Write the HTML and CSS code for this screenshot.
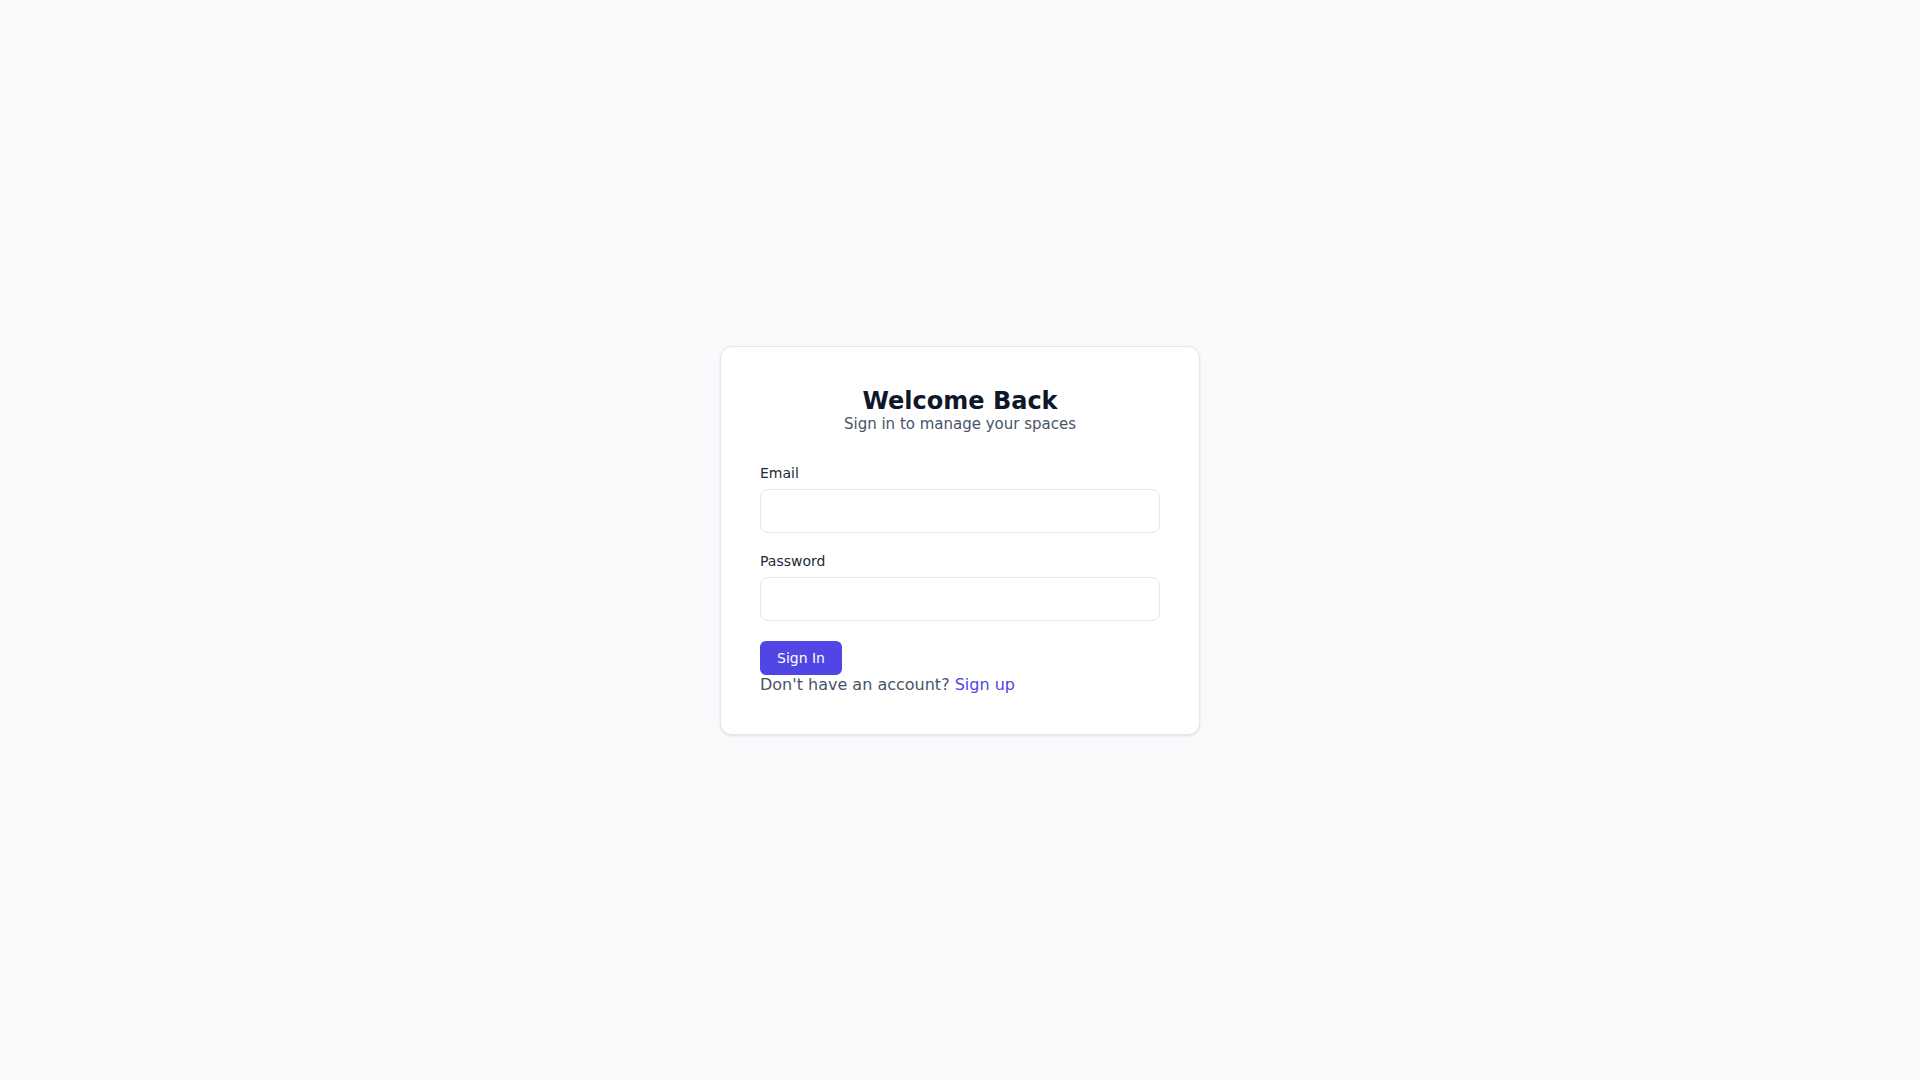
FILE: index.html
```html
<!DOCTYPE html>
<html lang="en">
<head>
<meta charset="utf-8">
<title>Sign In</title>
<link rel="stylesheet" href="styles.css">
</head>
<body>
<main class="page">
  <div class="card">
    <div class="header">
      <h1 class="title">Welcome Back</h1>
      <p class="subtitle">Sign in to manage your spaces</p>
    </div>
    <form class="form">
      <div class="field">
        <label class="label" for="email">Email</label>
        <input class="input" id="email" type="email">
      </div>
      <div class="field">
        <label class="label" for="password">Password</label>
        <input class="input" id="password" type="password">
      </div>
      <div class="actions">
        <button class="btn" type="button">Sign In</button>
        <p class="signup">Don't have an account? <a class="link" href="#">Sign up</a></p>
      </div>
    </form>
  </div>
</main>
</body>
</html>
```
FILE: styles.css
```css
* { box-sizing: border-box; }
html, body { margin: 0; padding: 0; }
body {
  font-family: "DejaVu Sans", sans-serif;
  background: #f8fafc;
  color: #0f172a;
  line-height: normal;
}
.page {
  min-height: 100vh;
  display: flex;
  align-items: center;
  justify-content: center;
}
.card {
  width: 480px;
  background: #ffffff;
  border: 1px solid #e2e8f0;
  border-radius: 12px;
  box-shadow: 0 1px 3px rgba(15, 23, 42, 0.07), 0 1px 2px rgba(15, 23, 42, 0.04);
  padding: 40px 39px 40px;
}
.header {
  text-align: center;
  margin-bottom: 32px;
}
.title {
  margin: 0;
  font-size: 24px;
  font-weight: 700;
  color: #0f172a;
}
.subtitle {
  margin: 0;
  font-size: 15px;
  color: #475569;
}
.form {
  display: flex;
  flex-direction: column;
  gap: 20px;
}
.field {
  display: flex;
  flex-direction: column;
}
.label {
  font-size: 14px;
  color: #1e293b;
  margin-bottom: 8px;
}
.input {
  height: 44px;
  width: 100%;
  border: 1px solid #e2e8f0;
  border-radius: 8px;
  background: #fff;
  font-family: inherit;
  font-size: 16px;
  padding: 0 12px;
  outline: none;
}
.actions {
  display: flex;
  flex-direction: column;
  align-items: flex-start;
}
.btn {
  font-family: inherit;
  font-size: 14px;
  line-height: 20px;
  padding: 7px 17px;
  background: #4f46e5;
  color: #ffffff;
  border: none;
  border-radius: 6px;
  cursor: pointer;
}
.signup {
  margin: 0;
  font-size: 16px;
  color: #475569;
}
.link {
  color: #4f46e5;
  text-decoration: none;
}
```
